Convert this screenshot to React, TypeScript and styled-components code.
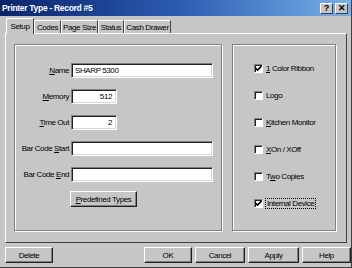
import React from "react";
import styled, { createGlobalStyle, css } from "styled-components";

const Global = createGlobalStyle`
  html, body { margin: 0; padding: 0; background: #c6c6c6; }
  body { font-family: "Liberation Sans", Arial, sans-serif; font-size: 8px; letter-spacing: -0.4px; color: #000; }
  * { box-sizing: border-box; }
`;

const Window = styled.div`
  width: 352px;
  height: 268px;
  background: #c6c6c6;
  display: flex;
  flex-direction: column;
  border-right: 1px solid #404040;
  border-bottom: 1px solid #404040;
  overflow: hidden;
`;

const TitleBar = styled.div`
  height: 16px;
  flex: none;
  display: flex;
  align-items: center;
  justify-content: space-between;
  padding: 0 3px 0 2px;
  background: linear-gradient(90deg, #0a246a 0%, #2a5ab0 50%, #78b0ea 100%);
`;

const Title = styled.span`
  color: #fff;
  font-weight: bold;
  font-size: 8.5px;
  letter-spacing: -0.3px;
`;

const TitleButtons = styled.div`
  display: flex;
  gap: 2px;
`;

const CaptionButton = styled.div`
  width: 13px;
  height: 11px;
  background: #c6c6c6;
  border-top: 1px solid #fff;
  border-left: 1px solid #fff;
  border-right: 1px solid #404040;
  border-bottom: 1px solid #404040;
  display: flex;
  align-items: center;
  justify-content: center;
  font-weight: bold;
  font-size: 9px;
  letter-spacing: 0;
  line-height: 1;
`;

const Tabs = styled.div`
  display: flex;
  align-items: flex-end;
  height: 16px;
  margin-top: 1px;
  padding-left: 6px;
  flex: none;
  position: relative;
  z-index: 1;
`;

const Tab = styled.div<{ $active?: boolean; $w: number }>`
  width: ${(p) => p.$w}px;
  height: 13px;
  border-top: 1px solid #fff;
  border-left: 1px solid #fff;
  border-right: 1px solid #404040;
  display: flex;
  align-items: center;
  justify-content: center;
  white-space: nowrap;
  background: #c6c6c6;
  ${(p) =>
    p.$active &&
    css`
      height: 16px;
      margin-bottom: -1px;
      padding-bottom: 1px;
    `}
`;

const Panel = styled.div`
  margin: 0 4px 0 5px;
  height: 210px;
  flex: none;
  border-top: 1px solid #fff;
  border-left: 1px solid #fff;
  border-right: 1px solid #404040;
  border-bottom: 1px solid #404040;
  padding: 10px 10px 11px 8px;
  display: flex;
  gap: 10px;
`;

const Group = styled.div<{ $w: number }>`
  width: ${(p) => p.$w}px;
  border: 1px solid #808080;
  box-shadow: inset 1px 1px 0 #fff, 1px 1px 0 #fff;
`;

const Form = styled.div`
  display: grid;
  grid-template-columns: 54px auto;
  column-gap: 2px;
  row-gap: 11px;
  padding: 18px 8px 0 0;
  align-items: center;
  justify-items: start;
`;

const Label = styled.span`
  justify-self: end;
  white-space: nowrap;
`;

const U = styled.span`
  text-decoration: underline;
`;

const Input = styled.div<{ $w: number; $right?: boolean }>`
  width: ${(p) => p.$w}px;
  height: 15px;
  background: #fff;
  border-top: 1px solid #808080;
  border-left: 1px solid #808080;
  border-right: 1px solid #fff;
  border-bottom: 1px solid #fff;
  box-shadow: inset 1px 1px 0 #202020, inset -1px -1px 0 #d8d8d8;
  display: flex;
  align-items: center;
  justify-content: ${(p) => (p.$right ? "flex-end" : "flex-start")};
  padding: 0 4px 0 3px;
  white-space: nowrap;
`;

const Button = styled.div<{ $w: number }>`
  width: ${(p) => p.$w}px;
  height: 16px;
  background: #c6c6c6;
  border-top: 1px solid #fff;
  border-left: 1px solid #fff;
  border-right: 1px solid #202020;
  border-bottom: 1px solid #202020;
  box-shadow: inset -1px -1px 0 #808080;
  display: flex;
  align-items: center;
  justify-content: center;
  white-space: nowrap;
`;

const ButtonCell = styled.div`
  grid-column: 2;
  margin-top: -2px;
  margin-left: -1px;
`;

const Checks = styled.div`
  display: flex;
  flex-direction: column;
  gap: 14px;
  padding: 17px 0 0 21px;
`;

const CheckRow = styled.div`
  display: flex;
  align-items: center;
  gap: 3px;
  height: 13px;
  white-space: nowrap;
`;

const Box = styled.div`
  width: 9px;
  height: 9px;
  background: #fff;
  border-top: 1px solid #808080;
  border-left: 1px solid #808080;
  border-right: 1px solid #fff;
  border-bottom: 1px solid #fff;
  box-shadow: inset 1px 1px 0 #202020;
  display: flex;
  align-items: center;
  justify-content: center;
`;

const Focus = styled.span`
  outline: 1px dotted #000;
  padding: 0 1px;
`;

const Footer = styled.div`
  display: flex;
  align-items: center;
  padding: 4px 0 0 5px;
  gap: 3px;
`;

const Spacer = styled.div`
  flex: 1;
`;

const Check = () => (
  <svg width="7" height="7" viewBox="0 0 7 7">
    <path d="M0.5 3 L2.5 5 L6.5 1" stroke="#000" strokeWidth="1.6" fill="none" />
  </svg>
);

const checks: { label: React.ReactNode; on?: boolean; focus?: boolean }[] = [
  { label: <><U>1</U> Color Ribbon</>, on: true },
  { label: <>Lo<U>g</U>o</> },
  { label: <><U>K</U>itchen Monitor</> },
  { label: <><U>X</U>On / XOff</> },
  { label: <>T<U>w</U>o Copies</> },
  { label: <>Internal Device</>, on: true, focus: true },
];

export default function App() {
  return (
    <>
      <Global />
      <Window>
        <TitleBar>
          <Title>Printer Type - Record #5</Title>
          <TitleButtons>
            <CaptionButton>?</CaptionButton>
            <CaptionButton>✕</CaptionButton>
          </TitleButtons>
        </TitleBar>
        <Tabs>
          <Tab $active $w={28}>Setup</Tab>
          <Tab $w={27}>Codes</Tab>
          <Tab $w={37}>Page Size</Tab>
          <Tab $w={26}>Status</Tab>
          <Tab $w={47}>Cash Drawer</Tab>
        </Tabs>
        <Panel>
          <Group $w={208}>
            <Form>
              <Label><U>N</U>ame</Label>
              <Input $w={142}>SHARP 5300</Input>
              <Label><U>M</U>emory</Label>
              <Input $w={46} $right>512</Input>
              <Label><U>T</U>ime Out</Label>
              <Input $w={46} $right>2</Input>
              <Label>Bar Code <U>S</U>tart</Label>
              <Input $w={142} />
              <Label>Bar Code <U>E</U>nd</Label>
              <Input $w={142} />
              <ButtonCell>
                <Button $w={67}><U>P</U>redefined Types</Button>
              </ButtonCell>
            </Form>
          </Group>
          <Group $w={104}>
            <Checks>
              {checks.map((c, i) => (
                <CheckRow key={i}>
                  <Box>{c.on && <Check />}</Box>
                  {c.focus ? <Focus>{c.label}</Focus> : <span>{c.label}</span>}
                </CheckRow>
              ))}
            </Checks>
          </Group>
        </Panel>
        <Footer>
          <Button $w={48}>Delete</Button>
          <Spacer />
          <Button $w={48}>OK</Button>
          <Button $w={50}>Cancel</Button>
          <Button $w={51}>Apply</Button>
          <Button $w={49}>Help</Button>
        </Footer>
      </Window>
    </>
  );
}
